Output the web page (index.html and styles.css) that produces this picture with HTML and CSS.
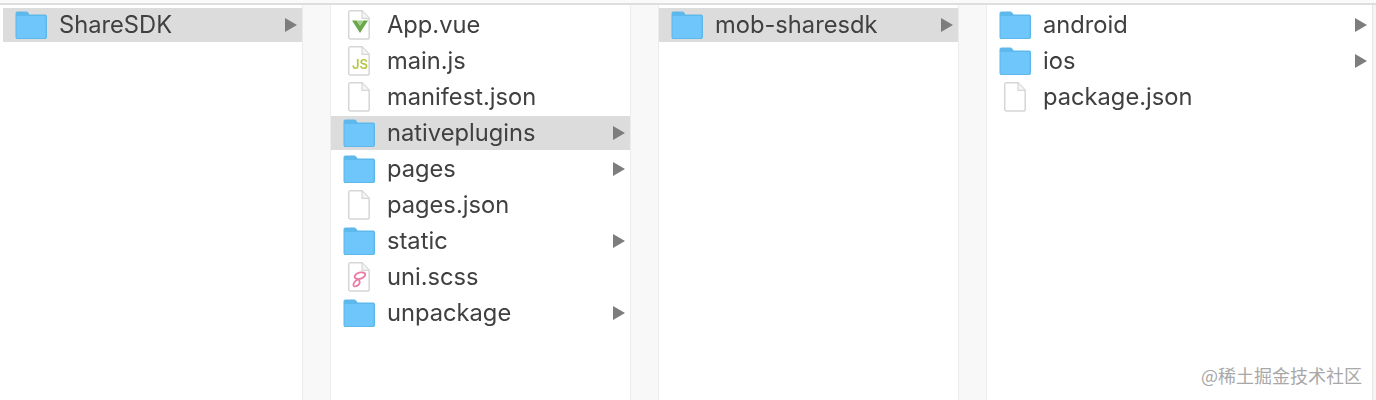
FILE: index.html
```html
<!DOCTYPE html>
<html lang="en">
<head>
    <meta charset="UTF-8">
    <meta name="viewport" content="width=device-width, initial-scale=1.0">
    <title>ShareSDK</title>
    <link rel="stylesheet" href="styles.css">
</head>
<body>

    <svg class="sprites" width="0" height="0">
        <defs>
            <symbol id="folder" viewBox="0 0 32 29">
                <path d="M2.500 0.500h8.500c1.300 0 2 .6 2.600 1.600l.9 1.400h15.500c1.300 0 2 .8 2 2v20.500c0 1.300-.8 2.100-2 2.100H2.500c-1.300 0-2-.8-2-2.100V2.500c0-1.300.8-2 2-2z" fill="#5db8ec"/>
                <path d="M1.500 5h29v20.800c0 .8-.5 1.200-1.200 1.200H2.700c-.7 0-1.200-.4-1.200-1.200z" fill="#6fc6fa"/>
            </symbol>
            <symbol id="file" viewBox="0 0 22 30">
                <path d="M2.500 .8h11.500l7.200 7.600v18.800c0 1.100-.7 1.800-1.800 1.800H2.500c-1.100 0-1.800-.7-1.800-1.800V2.600C.7 1.500 1.400 .8 2.500 .8z" fill="#fff" stroke="#d6d6d6" stroke-width="1.500"/>
                <path d="M14 1v7.400h7" fill="#f4f4f4" stroke="#d6d6d6" stroke-width="1.200"/>
            </symbol>
        </defs>
    </svg>

    <div class="top-line"></div>

    <div class="browser">
        <div class="column">
            <div class="row selected">
                <svg class="icon"><use href="#folder"/></svg>
                <span class="name">ShareSDK</span>
                <span class="arrow"></span>
            </div>
        </div>
        <div class="gutter"></div>

        <div class="column">
            <div class="row">
                <span class="icon file-wrap">
                    <svg class="file"><use href="#file"/></svg>
                    <svg class="badge" viewBox="0 0 16 13"><path d="M0 .5h4.500L8 5.500 11.500 .5H16L8 13z" fill="#6aa84a"/><path d="M4.500 .5h7L8 5.800z" fill="#a5cf92"/></svg>
                </span>
                <span class="name">App.vue</span>
            </div>
            <div class="row">
                <span class="icon file-wrap">
                    <svg class="file"><use href="#file"/></svg>
                    <span class="js-mark">JS</span>
                </span>
                <span class="name">main.js</span>
            </div>
            <div class="row">
                <span class="icon file-wrap"><svg class="file"><use href="#file"/></svg></span>
                <span class="name">manifest.json</span>
            </div>
            <div class="row selected">
                <svg class="icon"><use href="#folder"/></svg>
                <span class="name">nativeplugins</span>
                <span class="arrow"></span>
            </div>
            <div class="row">
                <svg class="icon"><use href="#folder"/></svg>
                <span class="name">pages</span>
                <span class="arrow"></span>
            </div>
            <div class="row">
                <span class="icon file-wrap"><svg class="file"><use href="#file"/></svg></span>
                <span class="name">pages.json</span>
            </div>
            <div class="row">
                <svg class="icon"><use href="#folder"/></svg>
                <span class="name">static</span>
                <span class="arrow"></span>
            </div>
            <div class="row">
                <span class="icon file-wrap">
                    <svg class="file"><use href="#file"/></svg>
                    <svg class="badge sass" viewBox="0 0 15 17"><path d="M13 2.500C11 .5 5 1 3 4.500 1.500 7.500 5 8 7 8.200c-3 .8-6 3.500-5.500 6.300.5 1.500 3 1 5-.7 1.500-1.500 1.500-3.500 0-5.600M13 2.500c1 2.500-2.500 5-6 5.700" fill="none" stroke="#ea7ba4" stroke-width="1.800" stroke-linecap="round"/></svg>
                </span>
                <span class="name">uni.scss</span>
            </div>
            <div class="row">
                <svg class="icon"><use href="#folder"/></svg>
                <span class="name">unpackage</span>
                <span class="arrow"></span>
            </div>
        </div>
        <div class="gutter"></div>

        <div class="column">
            <div class="row selected">
                <svg class="icon"><use href="#folder"/></svg>
                <span class="name">mob-sharesdk</span>
                <span class="arrow"></span>
            </div>
        </div>
        <div class="gutter"></div>

        <div class="column col-last">
            <div class="row">
                <svg class="icon"><use href="#folder"/></svg>
                <span class="name">android</span>
                <span class="arrow"></span>
            </div>
            <div class="row">
                <svg class="icon"><use href="#folder"/></svg>
                <span class="name">ios</span>
                <span class="arrow"></span>
            </div>
            <div class="row">
                <span class="icon file-wrap"><svg class="file"><use href="#file"/></svg></span>
                <span class="name">package.json</span>
            </div>
        </div>
        <div class="right-edge"></div>
    </div>

    <div class="watermark">@稀土掘金技术社区</div>

</body>
</html>
```

FILE: styles.css
```css
html, body { margin: 0; height: 400px; overflow: hidden; background: white; }
body { position: relative; font-family: Inter, "Liberation Sans", sans-serif; color: #404040; }
.sprites { position: absolute; }

.top-line { height: 3px; background: #fafafa; border-bottom: 2px solid #dedede; }
.browser { display: flex; height: 395px; padding-left: 3px; filter: blur(0.45px); }

.column { width: 299px; padding-top: 3px; box-sizing: border-box; flex: none; background: white; }
.col-last { width: 385px; }
.gutter { width: 29px; flex: none; background: #f8f8f8; border-left: 1px solid #ececec; border-right: 1px solid #ececec; box-sizing: border-box; }
.right-edge { flex: 1; background: #f4f4f4; border-left: 1px solid #e6e6e6; }

.row { display: flex; align-items: center; height: 34px; margin-bottom: 2px; padding: 0 5px 0 12px; }
.selected { background: #dcdcdc; }
.icon { display: block; width: 32px; height: 29px; flex: none; }
.name { flex: 1; margin-left: 12px; font-size: 23.7px; line-height: 34px; white-space: nowrap; }
.arrow { width: 0; height: 0; border-left: 12px solid #7d7d7d; border-top: 7px solid transparent; border-bottom: 7px solid transparent; }

.file-wrap { position: relative; height: 30px; }
.file { position: absolute; left: 5px; top: 0; width: 22px; height: 30px; }
.badge { position: absolute; left: 9px; top: 10px; width: 16px; height: 13px; }
.sass { top: 9px; width: 15px; height: 17px; }
.js-mark { position: absolute; left: 9px; top: 11px; font-size: 13px; line-height: 14px; font-weight: 600; color: #b5c73f; }

.watermark { position: absolute; right: 14px; top: 362px; font-family: "Noto Sans CJK SC", sans-serif; font-size: 18px; line-height: 26px; color: #a8a8a8; }
```
